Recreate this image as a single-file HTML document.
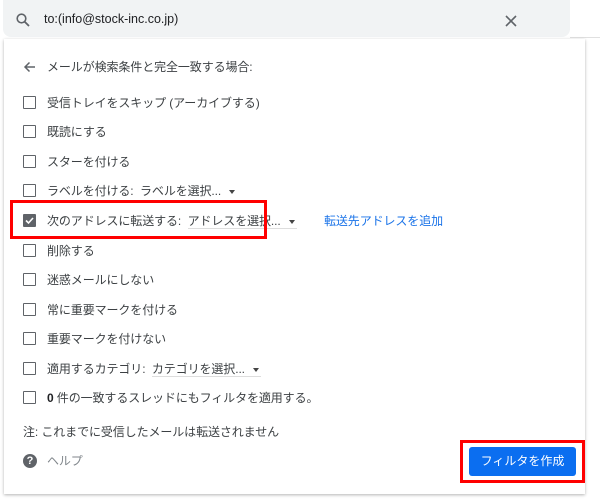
<!DOCTYPE html>
<html><head><meta charset="utf-8"><style>
body{margin:0;width:600px;height:501px;background:#fff;position:relative;overflow:hidden;font-family:"Liberation Sans","Noto Sans CJK JP",sans-serif;color:#3c4043;font-size:12px}
.search{position:absolute;left:3px;top:0;width:567px;height:37px;background:#f1f3f4;border-radius:0 0 8px 8px}
.panel{position:absolute;left:4px;top:39px;width:581px;height:455px;background:#fff;box-shadow:0 1px 3px rgba(0,0,0,.3)}
.row{position:absolute;left:47px;line-height:14px;white-space:nowrap;letter-spacing:-0.1px}
.cb{position:absolute;left:23px;width:11px;height:11px;border:1.5px solid #5f6368;border-radius:1px}
.sel{display:inline-block;border-bottom:1px solid #ddd;padding-right:2px}
.tri{display:inline-block;width:0;height:0;border-left:3.5px solid transparent;border-right:3.5px solid transparent;border-top:4px solid #444;margin-left:8px;vertical-align:middle}
.red{position:absolute;border:3px solid #f00}
</style></head><body>
<div class="search"></div>
<svg style="position:absolute;left:16px;top:13px" width="14" height="14" viewBox="0 0 14 14"><circle cx="5.5" cy="5.5" r="4.3" fill="none" stroke="#5f6368" stroke-width="1.6"/><path d="M8.7 8.7L13 13" stroke="#5f6368" stroke-width="1.8"/></svg>
<div style="position:absolute;left:44px;top:12px;font-size:12.5px;color:#202124">to:(info@stock-inc.co.jp)</div>
<svg style="position:absolute;left:505px;top:15px" width="12" height="12"><path d="M1 1L11 11M11 1L1 11" stroke="#5f6368" stroke-width="1.6"/></svg>
<div style="position:absolute;left:570px;top:37px;width:30px;height:1px;background:#e0e0e0"></div>
<div class="panel"></div>
<svg style="position:absolute;left:23px;top:61px" width="13" height="12"><path d="M12 6H2M6.5 1.5L2 6l4.5 4.5" fill="none" stroke="#5f6368" stroke-width="1.5"/></svg>
<div class="row" style="top:60px">メールが検索条件と完全一致する場合:</div>
<div class="cb" style="top:96px"></div><div class="row" style="top:96px">受信トレイをスキップ (アーカイブする)</div>
<div class="cb" style="top:125px"></div><div class="row" style="top:125px">既読にする</div>
<div class="cb" style="top:155px"></div><div class="row" style="top:155px">スターを付ける</div>
<div class="cb" style="top:184px"></div><div class="row" style="top:184px">ラベルを付ける:&nbsp; <span class="sel" style="border:0">ラベルを選択...<span class="tri"></span></span></div>
<div class="cb" style="top:214px;background:#5f6368;border-color:#5f6368"><svg width="11" height="11" style="position:absolute;left:0;top:0"><path d="M2 5.5l2.5 2.5L9 3" fill="none" stroke="#fff" stroke-width="1.6"/></svg></div>
<div class="row" style="top:214px">次のアドレスに転送する:&nbsp; <span class="sel">アドレスを選択...<span class="tri"></span></span></div>
<div class="row" style="top:214px;left:324px;color:#1a73e8">転送先アドレスを追加</div>
<div class="red" style="left:10px;top:200px;width:251px;height:33px"></div>
<div class="cb" style="top:244px"></div><div class="row" style="top:244px">削除する</div>
<div class="cb" style="top:273px"></div><div class="row" style="top:273px">迷惑メールにしない</div>
<div class="cb" style="top:303px"></div><div class="row" style="top:303px">常に重要マークを付ける</div>
<div class="cb" style="top:332px"></div><div class="row" style="top:332px">重要マークを付けない</div>
<div class="cb" style="top:362px"></div><div class="row" style="top:362px">適用するカテゴリ:&nbsp; <span class="sel">カテゴリを選択...<span class="tri"></span></span></div>
<div class="cb" style="top:391px"></div><div class="row" style="top:391px"><b style="color:#202124">0</b> 件の一致するスレッドにもフィルタを適用する。</div>
<div class="row" style="left:23px;top:425px">注: これまでに受信したメールは転送されません</div>
<div style="position:absolute;left:23px;top:454px;width:14px;height:14px;border-radius:50%;background:#5f6368;color:#fff;font-size:11px;font-weight:bold;text-align:center;line-height:14px">?</div>
<div class="row" style="top:454px;color:#80868b">ヘルプ</div>
<div style="position:absolute;left:469px;top:447px;width:107px;height:29px;background:#0b6ef0;border-radius:3px;color:#fff;text-align:center;line-height:29px;font-size:12px">フィルタを作成</div>
<div class="red" style="left:460px;top:440px;width:119px;height:37px"></div>
</body></html>
